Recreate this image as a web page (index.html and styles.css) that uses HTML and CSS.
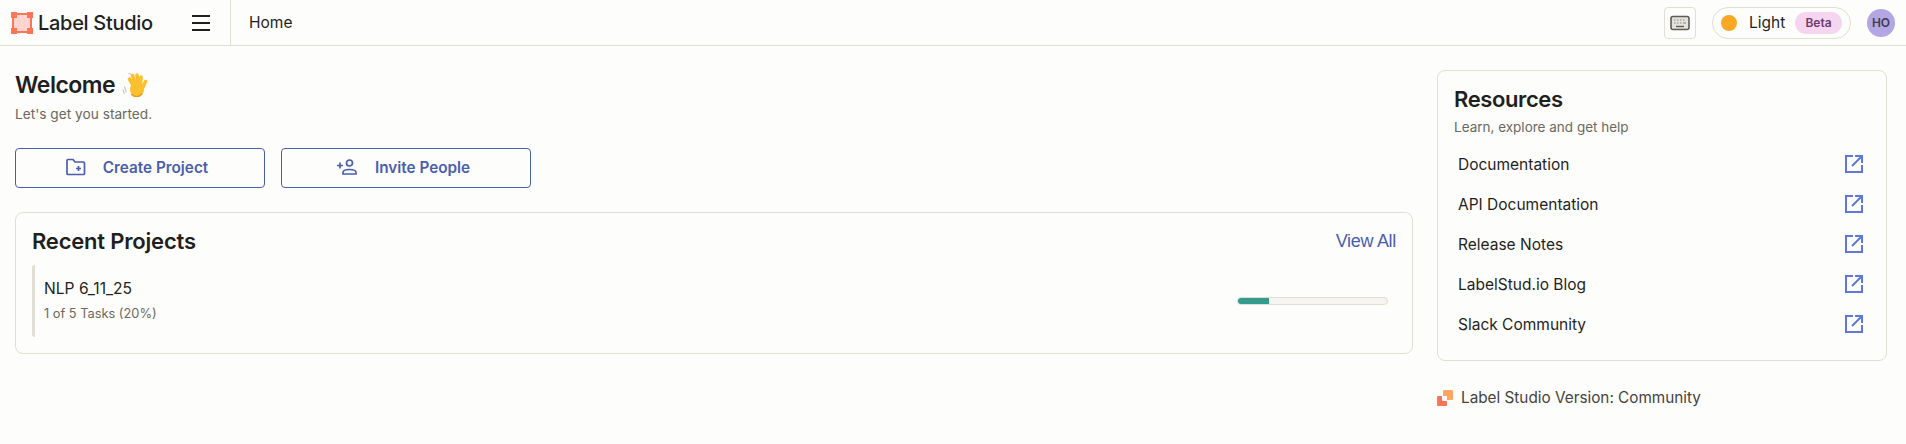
FILE: index.html
```html
<!DOCTYPE html>
<html lang="en">

<head>
    <meta charset="UTF-8">
    <meta name="viewport" content="width=device-width, initial-scale=1.0">
    <title>Label Studio</title>
    <link rel="stylesheet" href="styles.css">
</head>

<body>
    <header class="topbar">
        <div class="brand">
            <svg class="brand-logo" width="22" height="22" viewBox="0 0 22 22">
                <rect x="2" y="2" width="18" height="18" fill="#ffd6cf" stroke="#ff7557" stroke-width="2"/>
                <rect width="6" height="6" fill="#ff7557"/>
                <rect x="16" width="6" height="6" fill="#ff7557"/>
                <rect y="16" width="6" height="6" fill="#ff7557"/>
                <rect x="16" y="16" width="6" height="6" fill="#ff7557"/>
            </svg>
            <span class="brand-name">Label Studio</span>
            <button class="menu-button" aria-label="Menu"><span></span><span></span><span></span></button>
        </div>
        <div class="crumb">Home</div>
        <div class="topbar-right">
            <button class="hotkeys" aria-label="Keyboard shortcuts">
                <svg width="20" height="16" viewBox="0 0 20 16" fill="none">
                    <rect x="1" y="1.5" width="18" height="13" rx="2" fill="#e4e2dc" stroke="#5f5b55" stroke-width="1.6"/>
                    <path d="M4 5h1.4M7 5h1.4M10 5h1.4M13 5h1.4M4 8h1.4M7 8h1.4M10 8h1.4M13 8h3" stroke="#8a867f" stroke-width="1.2"/>
                    <path d="M6 11.5h8" stroke="#5f5b55" stroke-width="1.4"/>
                </svg>
            </button>
            <div class="theme-toggle">
                <span class="theme-dot"></span>
                <span class="theme-label">Light</span>
                <span class="beta">Beta</span>
            </div>
            <div class="avatar">HO</div>
        </div>
    </header>

    <main class="home">
        <section class="home-left">
            <h1>Welcome
                <svg class="wave" width="26" height="26" viewBox="0 0 26 26">
                    <path d="M2.500 15l1.800 5M1 18l1.200 3.500M7 1.500l2.500 1" stroke="#c9c9c9" stroke-width="1.200" fill="none" stroke-linecap="round"/>
                    <g stroke="#fcc02e" stroke-width="3.600" stroke-linecap="round" fill="none">
                        <path d="M11.500 14L7.500 7"/>
                        <path d="M13.500 12L10.500 3.500"/>
                        <path d="M16 11.500L15 3"/>
                        <path d="M18.500 12.500L19 5"/>
                        <path d="M20 17L23.500 9.500"/>
                    </g>
                    <ellipse cx="15" cy="17.500" rx="7" ry="7.500" fill="#fcc02e"/>
                    <path d="M9.500 22.500c2.500 2.500 7.500 3 10.500-.5" stroke="#e89a1c" stroke-width="1.200" fill="none" stroke-linecap="round"/>
                </svg>
            </h1>
            <p class="welcome-sub">Let's get you started.</p>
            <div class="actions">
                <a class="action-button">
                    <svg width="20" height="18" viewBox="0 0 20 18" fill="none" stroke="#4a5eb0" stroke-width="1.700">
                        <path d="M1 2.500c0-.6.400-1 1-1h5l2 2.500h8.500c.6 0 1 .4 1 1V15.500c0 .6-.4 1-1 1H2c-.6 0-1-.4-1-1z"/>
                        <path d="M10 10.500h5M12.500 8v5"/>
                    </svg>
                    Create Project
                </a>
                <a class="action-button">
                    <svg width="22" height="16" viewBox="0 0 22 16" fill="none" stroke="#4a5eb0" stroke-width="1.700">
                        <circle cx="13.500" cy="4" r="3"/>
                        <path d="M7 15v-1.500c0-1.800 3-3 6.500-3s6.500 1.200 6.500 3V15z"/>
                        <path d="M1 6.500h6M4 3.500v6"/>
                    </svg>
                    Invite People
                </a>
            </div>

            <div class="card projects">
                <div class="projects-head">
                    <h2>Recent Projects</h2>
                    <a class="view-all">View All</a>
                </div>
                <div class="project-row">
                    <div class="project-info">
                        <div class="project-name">NLP 6_11_25</div>
                        <div class="project-count">1 of 5 Tasks (20%)</div>
                    </div>
                    <div class="progress"><div class="progress-fill" style="width: 20%"></div></div>
                </div>
            </div>
        </section>

        <aside class="home-right">
            <div class="card resources">
                <h2>Resources</h2>
                <p class="resources-sub">Learn, explore and get help</p>
                <ul class="resource-list">
                    <li>Documentation
                        <svg class="ext" width="18" height="18" viewBox="0 0 18 18"><path d="M8 1H1v16h16v-7M10 1h7v7M17 1L7 11" fill="none" stroke="#5f78dd" stroke-width="2"/></svg>
                    </li>
                    <li>API Documentation
                        <svg class="ext" width="18" height="18" viewBox="0 0 18 18"><path d="M8 1H1v16h16v-7M10 1h7v7M17 1L7 11" fill="none" stroke="#5f78dd" stroke-width="2"/></svg>
                    </li>
                    <li>Release Notes
                        <svg class="ext" width="18" height="18" viewBox="0 0 18 18"><path d="M8 1H1v16h16v-7M10 1h7v7M17 1L7 11" fill="none" stroke="#5f78dd" stroke-width="2"/></svg>
                    </li>
                    <li>LabelStud.io Blog
                        <svg class="ext" width="18" height="18" viewBox="0 0 18 18"><path d="M8 1H1v16h16v-7M10 1h7v7M17 1L7 11" fill="none" stroke="#5f78dd" stroke-width="2"/></svg>
                    </li>
                    <li>Slack Community
                        <svg class="ext" width="18" height="18" viewBox="0 0 18 18"><path d="M8 1H1v16h16v-7M10 1h7v7M17 1L7 11" fill="none" stroke="#5f78dd" stroke-width="2"/></svg>
                    </li>
                </ul>
            </div>
            <div class="version">
                <svg width="16" height="16" viewBox="0 0 16 16">
                    <path d="M7 0h8a1 1 0 0 1 1 1v8a1 1 0 0 1-1 1H10V7a1 1 0 0 0-1-1H6V1a1 1 0 0 1 1-1z" fill="#ffa663"/>
                    <path d="M1 6h4v4a1 1 0 0 0 1 1h4v4a1 1 0 0 1-1 1H1a1 1 0 0 1-1-1V7a1 1 0 0 1 1-1z" fill="#ff7557"/>
                </svg>
                Label Studio Version: Community
            </div>
        </aside>
    </main>
</body>

</html>
```

FILE: styles.css
```css
:root {
    --bg-color: #fdfdfb;
    --border-color: #e1ded5;
    --text-color: #1f1f1f;
    --muted-color: #6b6860;
    --blue-color: #4a5eb0;
    --inter-font: 'Inter', sans-serif;
}

* {
    box-sizing: border-box;
}

body {
    margin: 0;
    font-family: var(--inter-font);
    background: var(--bg-color);
    color: var(--text-color);
}

h1,
h2,
p,
ul {
    margin: 0;
    padding: 0;
}

button {
    padding: 0;
    background: none;
    border: none;
    font-family: inherit;
}

/* top bar */
.topbar {
    display: flex;
    align-items: stretch;
    height: 46px;
    border-bottom: 1px solid var(--border-color);
}

.brand {
    display: flex;
    align-items: center;
    width: 231px;
    padding-left: 11px;
    border-right: 1px solid var(--border-color);
}

.brand-name {
    margin-left: 5px;
    width: 114px;
    font-size: 20px;
    font-weight: 500;
    letter-spacing: -0.3px;
    white-space: nowrap;
}

.menu-button {
    display: flex;
    flex-direction: column;
    gap: 5px;
    width: 18px;
    margin-left: 40px;
}

.menu-button span {
    height: 2px;
    background: var(--text-color);
}

.crumb {
    display: flex;
    align-items: center;
    padding-left: 18px;
    font-size: 15.5px;
    padding-bottom: 1px;
}

.topbar-right {
    display: flex;
    align-items: center;
    margin-left: auto;
    padding-right: 11px;
}

.hotkeys {
    display: flex;
    align-items: center;
    justify-content: center;
    width: 32px;
    height: 32px;
    border: 1px solid var(--border-color);
    border-radius: 4px;
}

.theme-toggle {
    display: flex;
    align-items: center;
    width: 139px;
    height: 32px;
    margin-left: 16px;
    padding: 0 8px;
    border: 1px solid var(--border-color);
    border-radius: 16px;
}

.theme-dot {
    width: 16px;
    height: 16px;
    border-radius: 50%;
    background: #f9a825;
}

.theme-label {
    margin-left: 12px;
    font-size: 15.5px;
}

.beta {
    margin-left: auto;
    width: 47px;
    height: 22px;
    border-radius: 11px;
    background: #f5d5f0;
    color: #6f3a6b;
    font-size: 12px;
    font-weight: 600;
    line-height: 22px;
    text-align: center;
}

.avatar {
    width: 28px;
    height: 28px;
    margin-left: 16px;
    border-radius: 50%;
    background: #b3a6e2;
    color: #3f3d4a;
    font-size: 12px;
    font-weight: 600;
    line-height: 28px;
    text-align: center;
}

/* page */
.home {
    display: flex;
    gap: 24px;
    padding: 24px 19px 0 15px;
}

.home-left {
    width: 1398px;
}

.home-right {
    width: 450px;
}

h1 {
    display: flex;
    align-items: center;
    gap: 7px;
    height: 30px;
    font-size: 23px;
    font-weight: 600;
    letter-spacing: -0.5px;
}

.welcome-sub {
    margin-top: 6px;
    font-size: 13.7px;
    line-height: 16px;
    color: var(--muted-color);
}

.actions {
    display: flex;
    gap: 16px;
    margin-top: 26px;
}

.action-button {
    display: flex;
    align-items: center;
    justify-content: center;
    gap: 17px;
    width: 250px;
    height: 40px;
    padding: 0 6px 2px 0;
    border: 1px solid var(--blue-color);
    border-radius: 4px;
    color: var(--blue-color);
    font-size: 15.3px;
    font-weight: 600;
}

.card {
    border: 1px solid var(--border-color);
    border-radius: 8px;
}

.projects {
    height: 142px;
    margin-top: 24px;
    padding: 13px 16px 0;
}

.projects-head {
    display: flex;
    align-items: center;
    justify-content: space-between;
    height: 30px;
}

h2 {
    font-size: 22px;
    font-weight: 600;
    letter-spacing: -0.2px;
}

.view-all {
    font-family: 'Liberation Sans', sans-serif;
    font-size: 18px;
    color: var(--blue-color);
    letter-spacing: -0.3px;
}

.project-row {
    display: flex;
    align-items: center;
    justify-content: space-between;
    height: 72px;
    margin-top: 9px;
    padding-left: 9px;
    padding-right: 8px;
    border-left: 3px solid var(--border-color);
    border-radius: 3px;
}

.project-info {
    padding-bottom: 2px;
}

.project-name {
    font-size: 15.6px;
}

.project-count {
    margin-top: 8px;
    font-size: 12.8px;
    color: var(--muted-color);
}

.progress {
    width: 151px;
    height: 8px;
    background: #f5f4f1;
    border: 1px solid var(--border-color);
    border-radius: 4px;
    overflow: hidden;
}

.progress-fill {
    height: 100%;
    margin: -1px;
    box-sizing: content-box;
    padding: 1px;
    background: #369a8d;
}

.resources {
    height: 291px;
    padding: 14px 16px 0;
}

.resources h2 {
    line-height: 28px;
    letter-spacing: -0.4px;
}

.resources-sub {
    margin-top: 6px;
    font-size: 13.5px;
    color: var(--muted-color);
}

.resource-list {
    margin-top: 9px;
    list-style: none;
}

.resource-list li {
    display: flex;
    align-items: center;
    justify-content: space-between;
    height: 40px;
    padding: 0 7px 0 4px;
    font-size: 15.5px;
}

.version {
    display: flex;
    align-items: center;
    gap: 8px;
    margin-top: 27px;
    font-size: 15.3px;
    color: #45433f;
}
```
